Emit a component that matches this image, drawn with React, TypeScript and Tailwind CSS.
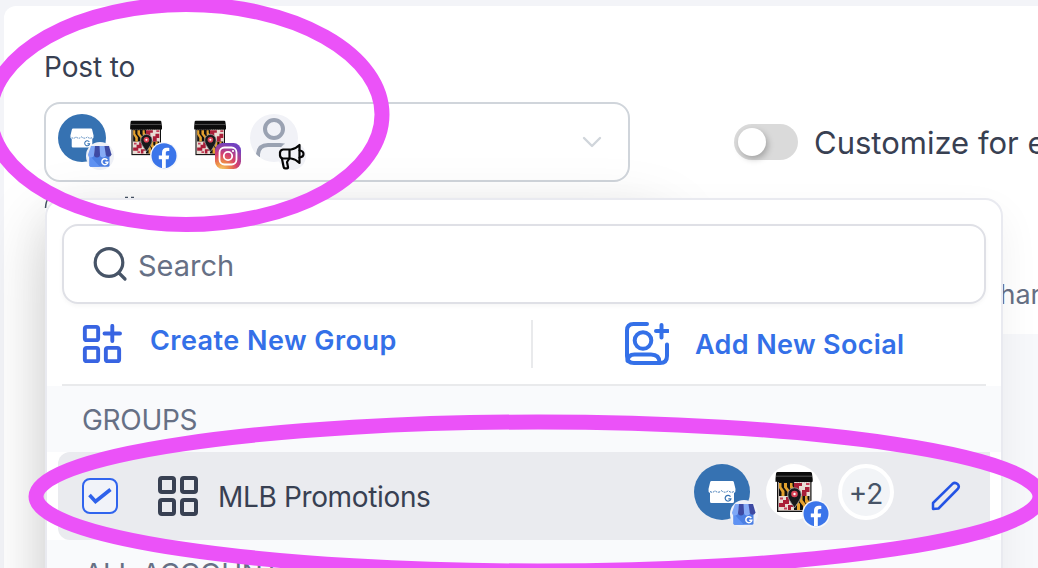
import type { ReactNode } from "react";

function StoreLogo() {
  return (
    <svg viewBox="0 0 56 56" className="size-full">
      <circle cx="28" cy="28" r="28" fill="#3672b2" />
      <path d="M17.500 17h21q1 0 1.300 1l1.700 7q.4 3-1.500 4v8.500q0 1.500-1.500 1.500h-21q-1.500 0-1.500-1.500V29q-2-1-1.500-4l1.700-7q.3-1 1.300-1z" fill="#fff" />
      <path d="M16 27.500q2.600 1.800 5-.8 3.300 3 6.500 0 3.400 3 6.800 0 2.600 2.600 5.700.8" fill="none" stroke="#3672b2" strokeWidth="1" strokeDasharray="2 1" />
      <path d="M36.500 32.600a2.900 2.900 0 1 0 .4 2.200h-2.600" fill="none" stroke="#3672b2" strokeWidth="1.200" />
    </svg>
  );
}

function MarylandLogo() {
  return (
    <svg viewBox="0 0 56 56" className="size-full">
      <circle cx="28" cy="28" r="28" fill="#fff" />
      <rect x="11" y="17" width="34.500" height="31" fill="#111" />
      <rect x="12.300" y="18" width="32" height="28.700" fill="#e8dcd4" />
      <path d="M13 18h15v14H13z" fill="#111" />
      <path d="M15.500 19v4l3 4v5h-3v-4L13 24v-5zM21 19v4l3.500 4.500V32h-3v-4L18 23.500V19zM26.500 19v3l1.500 2v6l-4-6v-5z" fill="#e3a12f" />
      <path d="M28 32h15.500v14H28z" fill="#111" />
      <path d="M31 32v4l3 4v6h-3v-4l-3-4v-6zM36.500 32v4l3.500 4.500V46h-3v-4l-3.500-4.500V32zM41.500 32v3l2 3v6l-4.500-6v-6z" fill="#e3a12f" />
      <path d="M28 19h8v3h-3v4h-5zM36 26h3v-3h4.500v5h-3v4H36z" fill="#a91e38" />
      <path d="M40 19h3.500v2H40z" fill="#c3415a" />
      <path d="M13 39h4v-3h3v-3h6v3h-3v4h-4v3h-6zM22 41h6v2h-3v3h-3z" fill="#a91e38" />
      <path d="M14 33.500h3v2h-3zM18 43.500h3v2h-3z" fill="#c3415a" />
      <path d="M28.500 44c-3.800-6.200-6.700-9-6.700-13.500a6.700 6.700 0 0 1 13.400 0c0 4.500-2.900 7.300-6.700 13.500z" fill="#18191b" stroke="#96979a" strokeWidth=".9" />
      <circle cx="28.500" cy="30" r="3.300" fill="#d94356" />
      <circle cx="28.500" cy="30" r="1.200" fill="#fff" />
      <path d="M10 9.500Q10 8 11.500 8h33q1.500 0 1.500 1.500l.7 5.500v2.500q-1.200 1.600-2.400 0-1.200 1.600-2.400 0-1.200 1.600-2.400 0-1.200 1.600-2.400 0-1.200 1.600-2.400 0-1.200 1.600-2.400 0-1.200 1.600-2.400 0-1.200 1.600-2.400 0-1.200 1.600-2.400 0-1.200 1.600-2.400 0-1.200 1.600-2.400 0-1.200 1.600-2.400 0-1.200 1.600-2.400 0-1.200 1.600-2.400 0-1.200 1.600-2.400 0-.8 1.200-1.200 0V15z" fill="#0c0c0c" />
      <path d="M10 12.200h36" stroke="#777" strokeWidth=".7" />
    </svg>
  );
}

function PersonLogo() {
  return (
    <svg viewBox="0 0 48 48" className="size-full">
      <clipPath id="person">
        <circle cx="24" cy="24" r="24" />
      </clipPath>
      <circle cx="24" cy="24" r="24" fill="#f1f2f7" />
      <g fill="none" stroke="#9aa2b2" strokeWidth="4" clipPath="url(#person)">
        <circle cx="24" cy="15" r="9" />
        <path d="M8 43v-3q1-9 10-9h12q8 0 10 8" />
      </g>
    </svg>
  );
}

function GoogleBadge() {
  return (
    <svg viewBox="0 0 28 28" className="size-full">
      <circle cx="14" cy="14" r="14" fill="#eff1f7" />
      <path d="M3.500 13h20v10.300q0 1.500-1.500 1.500H5q-1.500 0-1.500-1.500z" fill="#4c7fe3" />
      <path d="M4 14l10 10.800H5q-1.500 0-1.500-1.500V14z" fill="#5f92f3" />
      <path d="M5 4h4.500L8 12.500a3 3 0 0 1-6 0z" fill="#7ea7f6" />
      <path d="M9 4h5v8.500a3 3 0 0 1-6 0z" fill="#3e4aa3" />
      <path d="M13.500 4H19l1 8.500a3 3 0 0 1-6 0z" fill="#86abf6" />
      <path d="M18.500 4H23l2.500 8.500a3 3 0 0 1-5.800 0z" fill="#3e4aa3" />
      <path d="M21.300 18a3 3 0 1 0 .5 2.300h-2.600" fill="none" stroke="#fff" strokeWidth="1.500" />
    </svg>
  );
}

function FacebookBadge() {
  return (
    <svg viewBox="0 0 28 28" className="size-full">
      <circle cx="14" cy="14" r="14" fill="#f7f8fb" />
      <circle cx="14" cy="13.700" r="12.500" fill="#3b75ea" />
      <path d="M12 26.200v-9H8.800v-3.600H12v-2.800c0-3.300 1.900-5 4.800-5 1.400 0 2.500.2 2.500.2v3h-1.500c-1.500 0-2 .9-2 1.900v2.700h3.400l-.6 3.600h-2.800v9z" fill="#fff" />
    </svg>
  );
}

function InstagramBadge() {
  return (
    <svg viewBox="0 0 28 28" className="size-full">
      <defs>
        <radialGradient id="insta" cx=".25" cy="1.050" r="1.050">
          <stop offset="0" stopColor="#f7d36b" />
          <stop offset=".3" stopColor="#ee8b48" />
          <stop offset=".6" stopColor="#d6406f" />
          <stop offset="1" stopColor="#7242c0" />
        </radialGradient>
      </defs>
      <rect x="1" y="1" width="26" height="26" rx="7.500" fill="url(#insta)" />
      <rect x="5.500" y="5.500" width="17" height="17" rx="5" fill="none" stroke="#fff" strokeWidth="1.800" />
      <circle cx="14" cy="14" r="4.200" fill="none" stroke="#fff" strokeWidth="1.800" />
      <circle cx="19" cy="9" r="1.100" fill="#fff" />
    </svg>
  );
}

function MegaphoneBadge() {
  return (
    <svg viewBox="0 0 28 28" className="size-full">
      <circle cx="14" cy="14" r="14" fill="#f1f2f7" />
      <g fill="none" stroke="#050505" strokeWidth="2.200" strokeLinejoin="round" strokeLinecap="round">
        <path d="M5 7.500h8c4-.5 6.500-2.500 8.500-4.500v18c-2-2-4.500-4-8.500-4.500H5a3.500 3.500 0 0 1-3-3v-3a3.500 3.500 0 0 1 3-3zM11.500 7.500v9" />
        <path d="M4 17l1.700 8.300q.2 1 1.300 1h2q1.200 0 1-1.200l-1-5.100 2-3M21.500 8.500q4 .5 4 3.500t-4 3.500" />
      </g>
    </svg>
  );
}

const SELECTED = [
  { logo: <StoreLogo />, badge: <GoogleBadge /> },
  { logo: <MarylandLogo />, badge: <FacebookBadge /> },
  { logo: <MarylandLogo />, badge: <InstagramBadge /> },
  { logo: <PersonLogo />, badge: <MegaphoneBadge /> },
];

function Avatar({ logo, badge, large }: { logo: ReactNode; badge: ReactNode; large?: boolean }) {
  return (
    <div className={large ? "relative size-14" : "relative size-12"}>
      {logo}
      <div className="absolute -right-2 -bottom-2 size-7">{badge}</div>
    </div>
  );
}

function Select() {
  return (
    <div className="flex h-20 w-[586px] items-center rounded-2xl border-2 border-[#d0d5db] pl-3">
      <div className="-mt-2 flex gap-4">
        {SELECTED.map((item, i) => (
          <Avatar key={i} logo={item.logo} badge={item.badge} />
        ))}
      </div>
      <svg viewBox="0 0 20 12" className="mr-[26px] ml-auto h-3 w-5" fill="none" stroke="#d0d5db" strokeWidth="2.400" strokeLinecap="round" strokeLinejoin="round">
        <path d="M2 2l8 8 8-8" />
      </svg>
    </div>
  );
}

function PanelActions() {
  return (
    <div className="mx-[15px] flex h-[82px] border-b-2 border-[#e9eaec]">
      <div className="flex w-[469px] pl-5 text-[#3470e8]">
        <svg viewBox="0 0 40 40" className="mt-5 size-10" fill="none" stroke="#3864e2" strokeWidth="3.900" strokeLinecap="round">
          <rect x="2.850" y="2.850" width="13.300" height="13.300" rx="2" />
          <rect x="2.850" y="23.850" width="13.300" height="13.300" rx="2" />
          <rect x="23.850" y="23.850" width="13.300" height="13.300" rx="2" />
          <path d="M22.500 9.500h15.500M30.300 1.900v15.200" />
        </svg>
        <span className="mt-[17px] ml-7 text-[27px] leading-10 font-semibold tracking-[0.45px]">Create New Group</span>
      </div>
      <div className="mt-4 h-12 w-0.5 bg-[#e9eaec]" />
      <div className="flex text-[#3470e8]">
        <svg viewBox="0 0 46 46" className="mt-4 ml-[90px] size-[46px]" fill="none" stroke="#3470e8" strokeWidth="4" strokeLinecap="round" strokeLinejoin="round">
          <path d="M24 4h-13.500q-6.500 0-6.500 6.500v25.500q0 7 7 7h26q7 0 7-7V24.500" />
          <circle cx="20" cy="20.500" r="8.300" />
          <path d="M4.500 41q.5-6.500 7-6.500H28q8.500 0 8.500 8M33 11h12M38.500 5v12.500" />
        </svg>
        <span className="mt-[21px] ml-[26px] text-[27px] leading-10 font-semibold tracking-[0.35px]">Add New Social</span>
      </div>
    </div>
  );
}

function GroupRow() {
  return (
    <div className="flex h-[88px] pr-[11px] pl-[11px]">
      <div className="flex w-full items-center rounded-l-xl bg-[#eaebef] pl-6">
        <div className="flex size-9 items-center justify-center rounded-lg border-2 border-[#3064ee] bg-[#f1f3f9]">
          <svg viewBox="0 0 24 18" className="h-[18px] w-6" fill="none" stroke="#2f62eb" strokeWidth="3.600">
            <path d="M1.500 8l6 6.500L22.500 2.500" />
          </svg>
        </div>
        <svg viewBox="0 0 40 40" className="ml-10 size-10" fill="none" stroke="#384052" strokeWidth="4">
          <rect x="2" y="2" width="14" height="14" rx="2" />
          <rect x="24" y="2" width="14" height="14" rx="2" />
          <rect x="2" y="24" width="14" height="14" rx="2" />
          <rect x="24" y="24" width="14" height="14" rx="2" />
        </svg>
        <span className="mt-0.5 ml-5 text-[28px] leading-10 tracking-[-0.35px] text-[#384052]">MLB Promotions</span>
        <div className="-mt-2 ml-auto flex gap-4">
          <Avatar large logo={<StoreLogo />} badge={<GoogleBadge />} />
          <Avatar large logo={<MarylandLogo />} badge={<FacebookBadge />} />
          <div className="flex size-14 items-center justify-center rounded-full border-4 border-white bg-[#f2f4f7] pt-1 text-[28px] leading-10 text-[#475467]">+2</div>
        </div>
        <svg viewBox="0 0 30 30" className="mr-[29px] ml-[37px] size-[30px]" fill="none" stroke="#2453e4" strokeWidth="2.500" strokeLinejoin="round">
          <path d="M2 28v-6L21.500 2.800q2.500-2 5 .2t.2 5L7.500 27.500z" />
        </svg>
      </div>
    </div>
  );
}

function Panel() {
  return (
    <div className="absolute top-[198px] left-[45px] w-[958px]">
      <div className="absolute top-0 left-0 h-[600px] w-[620px] rounded-2xl shadow-[0_26px_68px_rgba(0,0,0,0.18)]" />
      <div className="relative h-[500px] overflow-hidden rounded-[18px] border-2 border-[#e9eaf0] bg-white shadow-[0_16px_40px_rgba(0,0,0,0.06)]">
        <div className="mx-[15px] mt-6 flex h-20 items-center rounded-2xl border-2 border-[#dfe0e6] pl-7 shadow-[0_2px_4px_rgba(0,0,0,0.04)]">
          <svg viewBox="0 0 36 36" className="size-9" fill="none" stroke="#475467" strokeWidth="3.200" strokeLinecap="round">
            <circle cx="17" cy="16.500" r="13.800" />
            <path d="M27 27l6 6" />
          </svg>
          <span className="mt-1 ml-2.5 text-[29px] leading-10 text-[#667085]">Search</span>
        </div>
        <PanelActions />
        <div className="h-[66px] bg-[#f9fafc] pt-3.5 pl-[35px] text-[28px] leading-10 tracking-[-0.3px] text-[#667085]">GROUPS</div>
        <GroupRow />
        <div className="h-[66px] bg-[#f9fafc] pt-3.5 pl-[37px] text-[28px] leading-10 tracking-[-0.3px] text-[#667085]">ALL ACCOUNTS</div>
      </div>
    </div>
  );
}

export default function App() {
  return (
    <div className="relative h-[568px] w-[1038px] overflow-hidden bg-[#f3f4f8] pt-1.5 pl-1 font-['Inter',sans-serif]">
      <div className="h-[562px] w-[1034px] overflow-hidden rounded-tl-xl bg-white pt-10 pl-10">
        <div className="pt-px text-[28px] leading-10 tracking-[-0.1px] text-[#384052]">Post to</div>
        <div className="mt-[15px] flex w-[1100px] items-center">
          <Select />
          <div className="ml-[104px] h-9 w-16 rounded-full bg-[#dadada] p-1">
            <div className="size-7 rounded-full bg-white shadow-[2px_3px_6px_rgba(0,0,0,0.25)]" />
          </div>
          <span className="mt-0.5 ml-4 text-[31px] leading-10 whitespace-nowrap text-[#384052]">Customize for each</span>
        </div>
        <div className="flex h-[92px]">
          <svg viewBox="0 0 100 30" className="mt-3 h-[30px] w-[100px]" fill="none" stroke="#475467" strokeWidth="1.500">
            <path d="M4 5q-2 2-2.500 9" />
            <path d="M81 3.500h3M87 3.500h3" />
          </svg>
        </div>
        <div className="ml-[940px] w-40 pt-px text-[27px] leading-10 text-[#667085]">chars</div>
        <div className="mt-[19px] ml-[900px] h-[300px] w-[200px] bg-[#f7f8fb]" />
      </div>
      <Panel />
      <svg viewBox="0 0 1038 568" className="absolute inset-0 h-[568px] w-[1038px]" fill="none" stroke="#eb52f8" strokeWidth="15">
        <ellipse cx="186" cy="114.500" rx="196" ry="110" />
        <ellipse cx="538" cy="496.500" rx="502" ry="74.500" />
      </svg>
    </div>
  );
}
